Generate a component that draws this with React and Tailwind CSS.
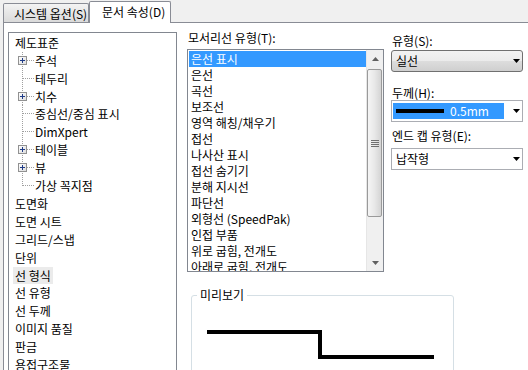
import React from "react";

const tree = [
  { t: "제도표준", lvl: 0 },
  { t: "주석", lvl: 1, plus: true },
  { t: "테두리", lvl: 1 },
  { t: "치수", lvl: 1, plus: true },
  { t: "중심선/중심 표시", lvl: 1 },
  { t: "DimXpert", lvl: 1 },
  { t: "테이블", lvl: 1, plus: true },
  { t: "뷰", lvl: 1, plus: true },
  { t: "가상 꼭지점", lvl: 1, last: true },
  { t: "도면화", lvl: 0 },
  { t: "도면 시트", lvl: 0 },
  { t: "그리드/스냅", lvl: 0 },
  { t: "단위", lvl: 0 },
  { t: "선 형식", lvl: 0, selected: true },
  { t: "선 유형", lvl: 0 },
  { t: "선 두께", lvl: 0 },
  { t: "이미지 품질", lvl: 0 },
  { t: "판금", lvl: 0 },
  { t: "용접구조물", lvl: 0 },
];

const edgeTypes = [
  "은선 표시",
  "은선",
  "곡선",
  "보조선",
  "영역 해칭/채우기",
  "접선",
  "나사산 표시",
  "접선 숨기기",
  "분해 지시선",
  "파단선",
  "외형선 (SpeedPak)",
  "인접 부품",
  "위로 굽힘, 전개도",
  "아래로 굽힘, 전개도",
];

function Connector({ plus, last }) {
  return (
    <svg width="20" height="18" className="shrink-0 overflow-visible">
      <line x1="9.5" y1="0" x2="9.5" y2={last ? 9 : 18} stroke="#a0a0a0" strokeDasharray="1 1" />
      <line x1={plus ? 14 : 10} y1="8.5" x2="21" y2="8.5" stroke="#a0a0a0" strokeDasharray="1 1" />
      {plus && (
        <>
          <defs>
            <linearGradient id="pb" x1="0" y1="0" x2="1" y2="1">
              <stop offset="0" stopColor="#ffffff" />
              <stop offset="1" stopColor="#dcdcdc" />
            </linearGradient>
          </defs>
          <rect x="5.5" y="4.5" width="8" height="8" fill="url(#pb)" stroke="#919191" />
          <path d="M7 8.5H12M9.5 6V11" stroke="#1f3b87" />
        </>
      )}
    </svg>
  );
}

function TreeRow({ item }) {
  if (item.lvl === 1) {
    return (
      <div className="flex items-center h-[17.87px]">
        <Connector plus={item.plus} last={item.last} />
        <span className="pl-[2px] leading-[16px] whitespace-nowrap">{item.t}</span>
      </div>
    );
  }
  return (
    <div className="flex items-center h-[17.87px]">
      <span className={"px-[2px] leading-[17px] whitespace-nowrap " + (item.selected ? "bg-[#ebebeb]" : "")}>{item.t}</span>
    </div>
  );
}

function Arrow() {
  return (
    <svg width="7" height="4" className="shrink-0">
      <polygon points="0,0 7,0 3.5,4" fill="#000" />
    </svg>
  );
}

function Scrollbar() {
  return (
    <div className="w-[17px] shrink-0 flex flex-col bg-[#f0f0f0] border-l border-[#e6e6e6]">
      <div className="h-[17px] flex items-center justify-center">
        <svg width="7" height="4">
          <polygon points="3.5,0 7,4 0,4" fill="#606060" />
        </svg>
      </div>
      <div className="mt-[2px] mr-[1px] h-[148px] rounded-[2px] border border-[#9a9a9a] bg-[linear-gradient(to_right,#f5f5f5,#e8e8e8_50%,#d4d4d4)] flex items-center justify-center">
        <svg width="8" height="7">
          <path d="M0 0.5H8M0 2.5H8M0 4.5H8M0 6.5H8" stroke="#6f6f6f" />
        </svg>
      </div>
      <div className="flex-1" />
      <div className="h-[17px] flex items-center justify-center">
        <svg width="7" height="4">
          <polygon points="0,0 7,0 3.5,4" fill="#606060" />
        </svg>
      </div>
    </div>
  );
}

export default function App() {
  return (
    <div className="w-[528px] h-[370px] overflow-hidden bg-[#f0f0f0] text-[12px] text-black font-[family-name:'Noto_Sans_CJK_KR',sans-serif]">
      {/* tabs */}
      <div className="h-[22px] flex items-end pl-[3px]">
        <div className="shrink-0 h-[19px] w-[86px] border border-b-0 border-[#898c95] rounded-t-[2px] bg-[linear-gradient(#f3f3f3,#e6e6e6_50%,#dadada)] pl-[10px] pt-[2px] leading-[16px] whitespace-nowrap overflow-hidden">
          시스템 옵션(S)
        </div>
        <div className="shrink-0 relative z-10 -mb-px h-[22px] w-[82px] border border-b-0 border-[#898c95] rounded-t-[2px] bg-white pl-[12px] pt-[2px] leading-[16px] whitespace-nowrap">
          문서 속성(D)
        </div>
      </div>

      {/* panel */}
      <div className="ml-[3px] w-[540px] h-[348px] border-l border-t border-[#898c95] bg-white flex items-start">
        {/* tree */}
        <div className="shrink-0 ml-[4px] mt-[9px] w-[169px] h-[340px] border border-[#828790] pt-[1px] pl-[4px] overflow-hidden">
          {tree.map((item) => (
            <TreeRow key={item.t} item={item} />
          ))}
        </div>

        <div className="shrink-0 ml-[10px] mt-[7px] flex flex-col">
          <div className="flex items-start">
            {/* edge types */}
            <div className="shrink-0 w-[197px] flex flex-col">
              <div className="h-[16px] leading-[16px] pl-[1px]">모서리선 유형(T):</div>
              <div className="mt-[3px] w-[197px] h-[223px] border border-[#828790] flex">
                <div className="flex-1 pt-[1px] pl-[1px] overflow-hidden">
                  {edgeTypes.map((t, i) => (
                    <div
                      key={t}
                      className={"h-[16px] leading-[16px] pl-[2px] whitespace-nowrap " + (i === 0 ? "bg-[#3399ff] text-white" : "")}
                    >
                      {t}
                    </div>
                  ))}
                </div>
                <Scrollbar />
              </div>
            </div>

            {/* right column */}
            <div className="shrink-0 ml-[7px] mt-[4px] w-[132px] flex flex-col">
              <div className="h-[14px] leading-[14px] pl-[1px]">유형(S):</div>
              <div className="mt-[2px] h-[22px] rounded-[3px] border border-[#707070] bg-[linear-gradient(#f2f2f2,#ebebeb_50%,#dddddd_50%,#cfcfcf)] flex items-center justify-between pl-[4px] pr-[2px]">
                <span>실선</span>
                <Arrow />
              </div>

              <div className="mt-[14px] h-[14px] leading-[14px] pl-[1px]">두께(H):</div>
              <div className="h-[22px] border border-[#abadb3] bg-white flex items-center pl-[1px] pr-[2px]">
                <div className="h-[16px] w-[111px] bg-[#3399ff] flex items-center">
                  <div className="ml-[3px] w-[48px] h-[4px] bg-black" />
                  <span className="ml-[6px] text-white leading-[16px]">0.5mm</span>
                </div>
                <div className="flex-1 flex justify-end">
                  <Arrow />
                </div>
              </div>

              <div className="mt-[7px] h-[14px] leading-[14px] pl-[1px]">엔드 캡 유형(E):</div>
              <div className="mt-[5px] h-[22px] border border-[#abadb3] bg-white flex items-center justify-between pl-[4px] pr-[2px]">
                <span>납작형</span>
                <Arrow />
              </div>
            </div>
          </div>

          <fieldset className="mt-[15px] ml-[4px] w-[263px] h-[100px] border border-[#d5dfe5] rounded-[3px]">
            <legend className="ml-[5px] px-[3px] leading-[16px]">미리보기</legend>
            <svg width="261" height="70" className="block">
              <polyline points="15,29 128,29 128,54 242,54" fill="none" stroke="#000" strokeWidth="4" />
            </svg>
          </fieldset>
        </div>
      </div>
    </div>
  );
}
